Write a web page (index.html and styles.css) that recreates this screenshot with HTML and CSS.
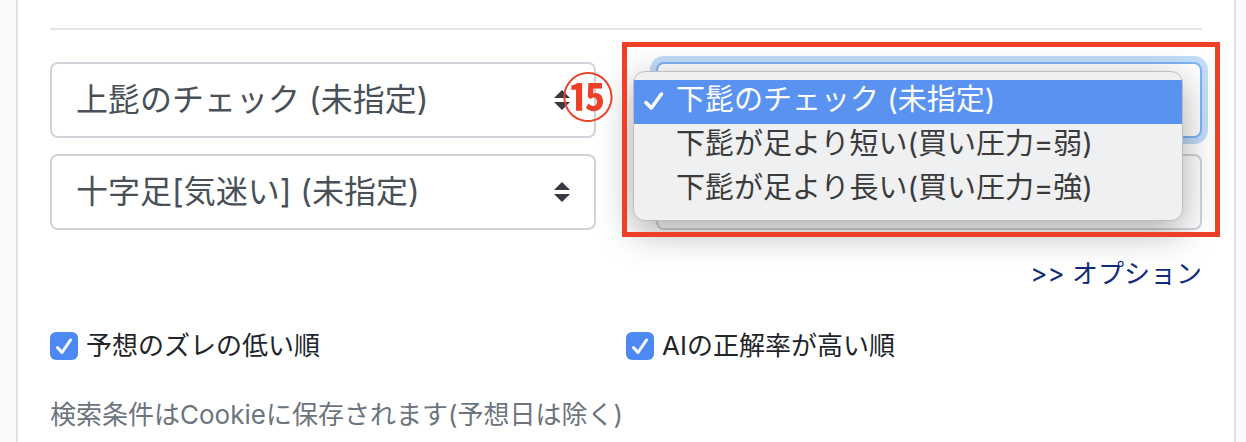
FILE: index.html
```html
<!DOCTYPE html>
<html lang="ja">
<head>
<meta charset="utf-8">
<meta name="viewport" content="width=device-width, initial-scale=1">
<title>検索条件</title>
<link rel="stylesheet" href="styles.css">
</head>
<body>
<main class="card">
  <hr class="divider">
  <form class="form">
    <div class="filters">
      <div class="filter-column">
        <div class="select-box">
          <select class="select" aria-label="上髭のチェック"><option>上髭のチェック (未指定)</option></select>
          <svg class="arrows" viewBox="0 0 16 20" aria-hidden="true"><path d="M0 8 8 0l8 8zM0 12h16l-8 8z"/></svg>
          <span class="badge">⑮</span>
        </div>
        <div class="select-box">
          <select class="select" aria-label="十字足"><option>十字足[気迷い] (未指定)</option></select>
          <svg class="arrows" viewBox="0 0 16 20" aria-hidden="true"><path d="M0 8 8 0l8 8zM0 12h16l-8 8z"/></svg>
        </div>
      </div>
      <div class="filter-column">
        <div class="select-box">
          <select class="select select-active" aria-label="下髭のチェック"><option>下髭のチェック (未指定)</option></select>
        </div>
        <div class="select-box">
          <select class="select" aria-label="その他の条件"><option></option></select>
        </div>
        <ul class="menu" role="listbox" aria-label="下髭のチェック">
          <li class="menu-item menu-item-selected" role="option" aria-selected="true">
            <svg class="menu-check" viewBox="0 0 20 20" aria-hidden="true"><path d="M2 11.500 7.300 17 17.500 3"/></svg>
            <span>下髭のチェック (未指定)</span>
          </li>
          <li class="menu-item" role="option" aria-selected="false">下髭が足より短い(買い圧力=弱)</li>
          <li class="menu-item" role="option" aria-selected="false">下髭が足より長い(買い圧力=強)</li>
        </ul>
        <div class="highlight"></div>
      </div>
    </div>
    <a class="options-link" href="#">&gt;&gt; オプション</a>
    <div class="checks">
      <label class="check"><input class="check-input" type="checkbox" checked><svg class="check-mark" viewBox="0 0 28 28" aria-hidden="true"><path d="M7.500 15.500 12 20.500 20.500 8"/></svg><span>予想のズレの低い順</span></label>
      <label class="check"><input class="check-input" type="checkbox" checked><svg class="check-mark" viewBox="0 0 28 28" aria-hidden="true"><path d="M7.500 15.500 12 20.500 20.500 8"/></svg><span>AIの正解率が高い順</span></label>
    </div>
    <p class="note">検索条件はCookieに保存されます(予想日は除く)</p>
  </form>
</main>
</body>
</html>
```
FILE: styles.css
```css
* {
  box-sizing: border-box;
}

body {
  margin: 0;
  background: #f8fafc;
  color: #212529;
  font: 26px/40px Inter, "Noto Sans CJK JP", sans-serif;
}

.card {
  min-height: 100vh;
  margin: 0 10px 0 16px;
  padding: 28px 32px 0;
  border: solid #dee2e6;
  border-width: 0 2px;
  background: #fff;
}

.divider {
  height: 2px;
  margin: 0 0 32px;
  border: 0;
  background: #e5e5e5;
}

.form {
  display: flex;
  flex-direction: column;
}

.filters {
  display: grid;
  grid-template-columns: 1fr 1fr;
  gap: 60px;
}

.filter-column {
  position: relative;
  display: grid;
  gap: 16px;
}

.select-box {
  position: relative;
  display: grid;
  grid-template-columns: 1fr auto;
  align-items: center;
}

.select {
  grid-area: 1 / 1 / 2 / 3;
  width: 100%;
  height: 76px;
  padding: 0 56px 0 24px;
  border: 2px solid #ced4da;
  border-radius: 8px;
  background: #fff;
  color: #495057;
  font: inherit;
  font-size: 32px;
  appearance: none;
}

.select-active {
  border-color: #80b4f5;
  box-shadow: 0 0 0 6px #c2dcfa;
}

.arrows {
  grid-area: 1 / 2;
  z-index: 1;
  width: 16px;
  height: 20px;
  margin-right: 26px;
  fill: #343a40;
  pointer-events: none;
}

.badge {
  position: absolute;
  z-index: 2;
  top: 7px;
  right: -18px;
  color: #ee4026;
  font-family: "Noto Sans CJK JP", sans-serif;
  font-size: 52px;
  font-weight: 700;
  line-height: 52px;
}

.menu {
  position: absolute;
  z-index: 1;
  top: 9px;
  right: 19px;
  left: -23px;
  margin: 0;
  padding: 8px 0;
  border: 1px solid #bfbfbf;
  border-radius: 12px;
  background: #eff0f1;
  box-shadow: 0 10px 36px rgba(0, 0, 0, 0.34);
  color: #3b3b3b;
  font-size: 29px;
  line-height: 44px;
  list-style: none;
}

.menu-item {
  position: relative;
  height: 44px;
  padding-left: 42px;
  line-height: 40px;
  white-space: nowrap;
}

.menu-item-selected {
  background: #5992f1;
  color: #fff;
}

.menu-check {
  position: absolute;
  top: 11px;
  left: 10px;
  width: 20px;
  height: 20px;
  fill: none;
  stroke: #fff;
  stroke-width: 3.5;
  stroke-linecap: round;
  stroke-linejoin: round;
}

.highlight {
  position: absolute;
  z-index: 2;
  inset: -20px -18px -7px -34px;
  border: 5px solid #ee4026;
  pointer-events: none;
}

.options-link {
  align-self: flex-end;
  margin-top: 24px;
  color: #122b7c;
  text-decoration: none;
}

.checks {
  display: grid;
  grid-template-columns: 1fr 1fr;
  margin-top: 32px;
}

.check {
  display: grid;
  grid-template-columns: 28px 1fr;
  column-gap: 8px;
  align-items: center;
}

.check-input {
  grid-area: 1 / 1;
  width: 28px;
  height: 28px;
  margin: 0;
  border-radius: 6px;
  background: #4c89f5;
  appearance: none;
}

.check-mark {
  grid-area: 1 / 1;
  width: 28px;
  height: 28px;
  fill: none;
  stroke: #fff;
  stroke-width: 3;
  stroke-linecap: round;
  stroke-linejoin: round;
  pointer-events: none;
}

.check-input:not(:checked) + .check-mark {
  visibility: hidden;
}

.note {
  margin: 29px 0 0;
  color: #6c757d;
}
```
